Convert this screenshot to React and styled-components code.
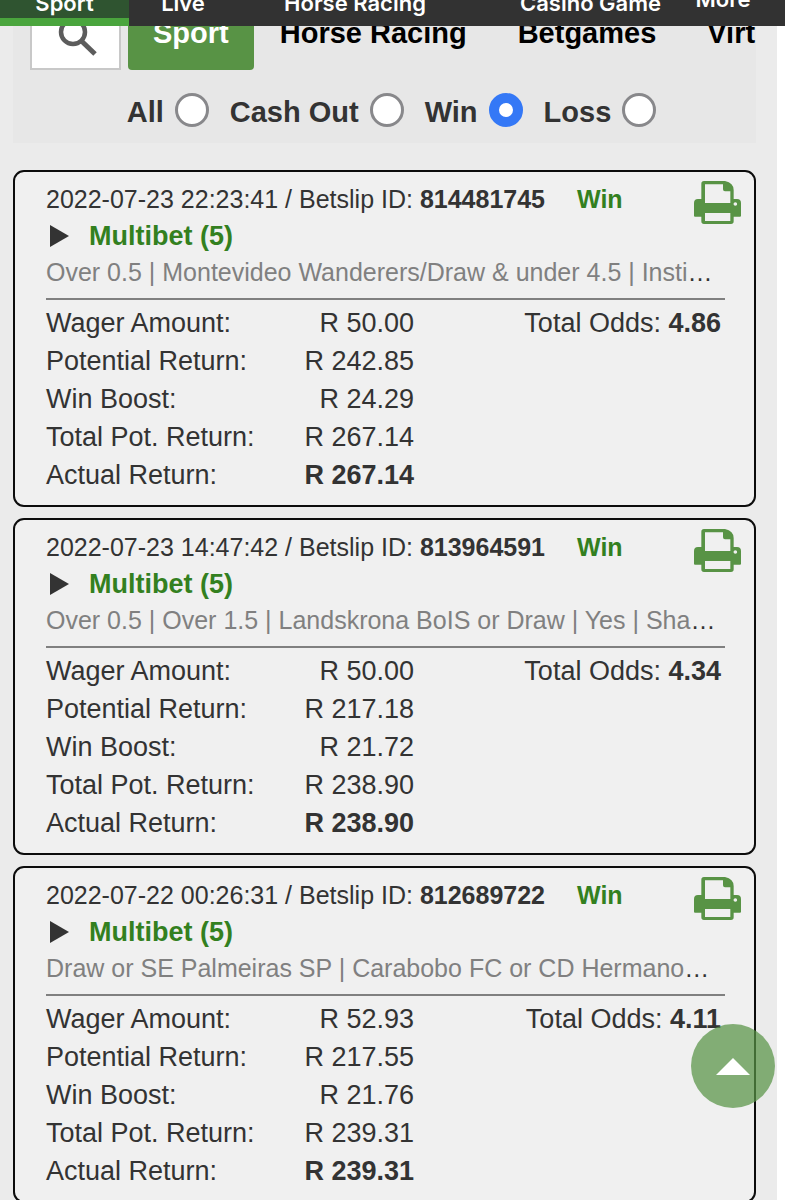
import React, { useState } from "react";
import styled, { createGlobalStyle } from "styled-components";

const GlobalStyle = createGlobalStyle`
  * { box-sizing: border-box; }
  body {
    margin: 0;
    background: #fff;
    color: #333;
    font-family: "Liberation Sans", Arial, sans-serif;
    font-size: 27px;
  }
  button { font: inherit; color: inherit; border: 0; background: none; padding: 0; cursor: pointer; }
`;

const TopNav = styled.nav`
  position: fixed;
  top: 0;
  left: 0;
  right: 0;
  z-index: 2;
  height: 26px;
  overflow: hidden;
  background: #323232;
  display: grid;
  grid-template-columns: 129fr 108fr 236fr 188fr 124fr;
  grid-template-rows: 26px;
`;

const NavLink = styled.a`
  display: flex;
  align-items: flex-end;
  justify-content: ${(p) => p.$justify || "center"};
  padding-bottom: ${(p) => (p.$active ? 3 : p.$raised ? 15 : 11)}px;
  border-bottom: ${(p) => (p.$active ? "8px solid #4aa53d" : "0")};
  background: ${(p) => (p.$active ? "#2f5430" : "transparent")};
  color: #fff;
  font: 600 22px/24px Inter, "Liberation Sans", sans-serif;
  white-space: nowrap;
  text-decoration: none;
`;

const Page = styled.main`
  margin-right: 8px;
  padding: 0 21px 0 13px;
  background: #ebebeb;
`;

const FilterPanel = styled.section`
  background: #e7e7e7;
  padding-bottom: 16px;
`;

const TabRow = styled.div`
  display: flex;
  gap: 7px;
  padding-left: 17px;
  overflow: hidden;
`;

const SearchButton = styled.button`
  flex: none;
  width: 91px;
  height: 70px;
  padding-top: 7px;
  background: #fff;
  border: 2px solid #c8c8c8;
  display: flex;
  justify-content: center;
`;

const Tabs = styled.div`
  display: flex;
  gap: 1px;
  min-width: 0;
  overflow: hidden;
`;

const Tab = styled.button`
  flex: none;
  height: 70px;
  padding: 0 25px 4px;
  border-radius: 4px;
  font-size: 29px;
  font-weight: 700;
  background: ${(p) => (p.$active ? "#589345" : "transparent")};
  color: ${(p) => (p.$active ? "#fff" : "#000")};
`;

const StatusRow = styled.div`
  display: flex;
  justify-content: center;
  gap: 21px;
  margin-top: 23px;
  padding-left: 14px;
`;

const StatusLabel = styled.label`
  display: flex;
  align-items: center;
  gap: 11px;
  font-size: 29px;
  line-height: 30px;
  font-weight: 700;
  white-space: nowrap;
`;

const StatusText = styled.span`
  padding-top: 4px;
`;

const Radio = styled.input`
  appearance: none;
  width: 34px;
  height: 34px;
  margin: 0;
  border: 3px solid #88888b;
  border-radius: 50%;
  background: #fff;
  &:checked {
    border: 10px solid #3478f6;
  }
`;

const SlipList = styled.div`
  display: grid;
  gap: 11px;
  padding-top: 27px;
`;

const Slip = styled.article`
  position: relative;
  min-width: 0;
  padding: 12px 29px 11px 31px;
  border: 2px solid #0c0c0c;
  border-radius: 11px;
  background: #f0f0f0;
`;

const SlipHead = styled.div`
  display: flex;
  gap: 32px;
  font-size: 25px;
  line-height: 30px;
  white-space: nowrap;
`;

const Result = styled.strong`
  color: #33801f;
`;

const PrintButton = styled.button`
  position: absolute;
  top: 9px;
  right: 13px;
  display: flex;
`;

const BetToggle = styled.button`
  display: flex;
  align-items: center;
  gap: 20px;
  height: 44px;
  padding-left: 4px;
  color: #33801f;
  font-weight: 700;
`;

const Legs = styled.div`
  padding-right: 6px;
`;

const LegsLine = styled.div`
  overflow: hidden;
  white-space: nowrap;
  text-overflow: ellipsis;
  font-size: 25px;
  line-height: 28px;
`;

const LegsText = styled.span`
  color: #808080;
`;

const Rule = styled.hr`
  height: 2px;
  margin: 12px 0 4px;
  border: 0;
  background: #808080;
`;

const Figures = styled.div`
  display: flex;
  justify-content: space-between;
  align-items: flex-start;
  line-height: 38px;
  white-space: nowrap;
`;

const Amounts = styled.table`
  width: 368px;
  border-collapse: collapse;
  th, td { padding: 0; }
  th { font-weight: 400; text-align: left; }
  td { text-align: right; }
  tr:last-child td { font-weight: 700; }
`;

const Odds = styled.div`
  padding-right: 4px;
`;

const ToTop = styled.button`
  position: fixed;
  right: 10px;
  bottom: 92px;
  z-index: 1;
  width: 84px;
  height: 84px;
  border-radius: 50%;
  background: rgba(88, 147, 69, 0.72);
  display: flex;
  align-items: center;
  justify-content: center;
`;

const PrinterIcon = () => (
  <svg width="47" height="43" viewBox="0 0 141 129" fill="#589345" aria-hidden="true">
    <path
      fillRule="evenodd"
      d="M30 0H93Q119 6 119 27V54H129Q141 54 141 66V104Q141 107 138 107H119V121Q119 129 111 129H30Q22 129 22 121V107H3Q0 107 0 104V66Q0 54 12 54H22V8Q22 0 30 0ZM33 10V66H109V31H93Q87 31 87 25V10ZM33 96V120H109V96ZM124 63.500A5.500 5.500 0 1 0 124 74.500A5.500 5.500 0 1 0 124 63.500Z"
    />
  </svg>
);

const SearchIcon = () => (
  <svg width="44" height="48" viewBox="0 0 44 48" fill="none" stroke="#5c5c5c" aria-hidden="true">
    <circle cx="19" cy="23" r="12" strokeWidth="4.500" />
    <path d="M28 32.500L41 45" strokeWidth="5" />
  </svg>
);

const slips = [
  {
    time: "2022-07-23 22:23:41",
    id: "814481745",
    legs: "Over 0.5 | Montevideo Wanderers/Draw & under 4.5 | Instituto",
    odds: "4.86",
    amounts: ["50.00", "242.85", "24.29", "267.14", "267.14"],
  },
  {
    time: "2022-07-23 14:47:42",
    id: "813964591",
    legs: "Over 0.5 | Over 1.5 | Landskrona BoIS or Draw | Yes | Shamrock",
    odds: "4.34",
    amounts: ["50.00", "217.18", "21.72", "238.90", "238.90"],
  },
  {
    time: "2022-07-22 00:26:31",
    id: "812689722",
    legs: "Draw or SE Palmeiras SP | Carabobo FC or CD Hermanos Colmenarez",
    odds: "4.11",
    amounts: ["52.93", "217.55", "21.76", "239.31", "239.31"],
  },
];

const amountLabels = [
  "Wager Amount:",
  "Potential Return:",
  "Win Boost:",
  "Total Pot. Return:",
  "Actual Return:",
];

function BetSlip({ slip }) {
  return (
    <Slip>
      <SlipHead>
        <span>
          {slip.time} / Betslip ID: <strong>{slip.id}</strong>
        </span>
        <Result>Win</Result>
      </SlipHead>
      <PrintButton type="button" aria-label="Print betslip">
        <PrinterIcon />
      </PrintButton>
      <BetToggle type="button" aria-expanded="false">
        <svg width="19" height="22" viewBox="0 0 19 22" fill="#333" aria-hidden="true">
          <path d="M0 0L19 11L0 22Z" />
        </svg>
        Multibet (5)
      </BetToggle>
      <Legs>
        <LegsLine>
          <LegsText>{slip.legs}</LegsText>
        </LegsLine>
      </Legs>
      <Rule />
      <Figures>
        <Amounts>
          <tbody>
            {amountLabels.map((label, i) => (
              <tr key={label}>
                <th scope="row">{label}</th>
                <td>R {slip.amounts[i]}</td>
              </tr>
            ))}
          </tbody>
        </Amounts>
        <Odds>
          Total Odds: <strong>{slip.odds}</strong>
        </Odds>
      </Figures>
    </Slip>
  );
}

export default function App() {
  const [status, setStatus] = useState("Win");
  return (
    <>
      <GlobalStyle />
      <TopNav>
        <NavLink href="#sport" $active>Sport</NavLink>
        <NavLink href="#live">Live</NavLink>
        <NavLink href="#racing">Horse Racing</NavLink>
        <NavLink href="#casino" $justify="flex-end">Casino Game</NavLink>
        <NavLink href="#more" $raised>More</NavLink>
      </TopNav>
      <Page>
        <FilterPanel>
          <TabRow>
            <SearchButton type="button" aria-label="Search">
              <SearchIcon />
            </SearchButton>
            <Tabs>
              {["Sport", "Horse Racing", "Betgames", "Virtuals"].map((name) => (
                <Tab key={name} type="button" $active={name === "Sport"}>
                  {name}
                </Tab>
              ))}
            </Tabs>
          </TabRow>
          <StatusRow>
            {["All", "Cash Out", "Win", "Loss"].map((name) => (
              <StatusLabel key={name}>
                <StatusText>{name}</StatusText>
                <Radio
                  type="radio"
                  name="status"
                  checked={status === name}
                  onChange={() => setStatus(name)}
                />
              </StatusLabel>
            ))}
          </StatusRow>
        </FilterPanel>
        <SlipList>
          {slips.map((slip) => (
            <BetSlip key={slip.id} slip={slip} />
          ))}
        </SlipList>
      </Page>
      <ToTop type="button" aria-label="Back to top">
        <svg width="34" height="17" viewBox="0 0 34 17" fill="#fff" aria-hidden="true">
          <path d="M17 0L34 17H0Z" />
        </svg>
      </ToTop>
    </>
  );
}
